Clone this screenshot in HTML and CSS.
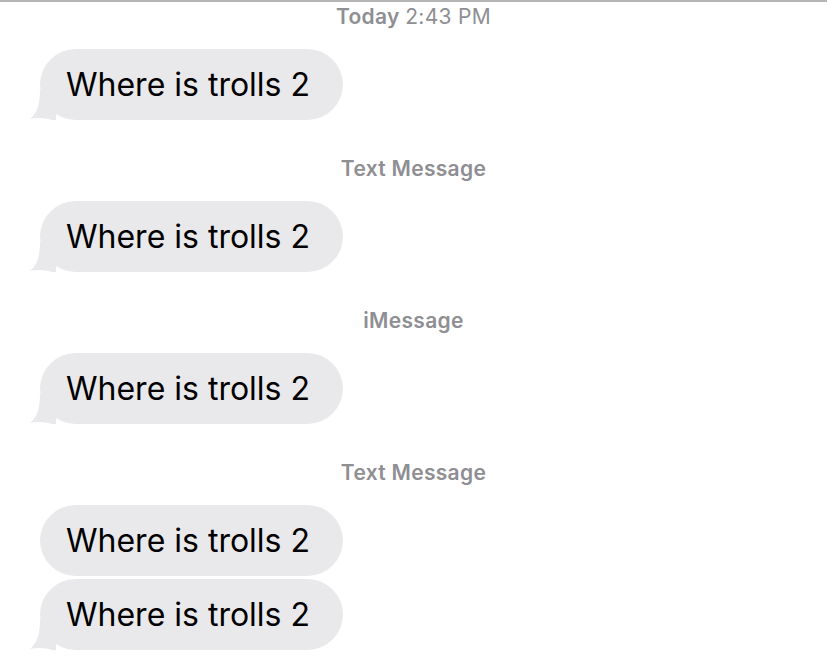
FILE: index.html
```html
<!DOCTYPE html>
<html lang="en">
<head>
    <meta charset="UTF-8">
    <title>Messages</title>
    <link rel="stylesheet" href="styles.css">
</head>
<body>
    <div class="thread">
        <div class="stamp"><b>Today</b> <span class="time">2:43 PM</span></div>
        <div class="bubble tail">Where is trolls 2</div>

        <div class="stamp">Text Message</div>
        <div class="bubble tail">Where is trolls 2</div>

        <div class="stamp">iMessage</div>
        <div class="bubble tail">Where is trolls 2</div>

        <div class="stamp">Text Message</div>
        <div class="bubble">Where is trolls 2</div>
        <div class="bubble tail">Where is trolls 2</div>
    </div>
</body>
</html>
```

FILE: styles.css
```css
body {
    margin: 0;
    background: #ffffff;
    font-family: Inter, "Noto Sans", sans-serif;
}
.thread {
    border-top: 2px solid #b4b4b4;
    padding: 0 0 20px 40px;
    display: flex;
    flex-direction: column;
    align-items: flex-start;
}
.stamp {
    align-self: stretch;
    text-align: center;
    margin: 34px 0 20px -40px;
    color: #8e8e93;
    font-size: 21px;
    line-height: 24px;
    font-weight: 600;
    letter-spacing: 0.3px;
}
.stamp:first-child {
    margin-top: 3px;
}
.stamp b {
    font-weight: 600;
}
.stamp .time {
    font-weight: 400;
}
.bubble {
    position: relative;
    background: #e9e9eb;
    color: #000;
    font-size: 32px;
    line-height: 71px;
    height: 71px;
    width: 303px;
    padding: 0 0 0 26px;
    border-radius: 36px;
    margin-bottom: 3px;
    box-sizing: border-box;
}
.bubble.tail::before {
    content: "";
    position: absolute;
    left: -12px;
    bottom: 0;
    width: 40px;
    height: 30px;
    background: #e9e9eb;
    clip-path: path("M12 0 L28 0 L28 30 L24 30 C18 28 12 27 2 29 C8 24 12 16 12 0 Z");
}
```
